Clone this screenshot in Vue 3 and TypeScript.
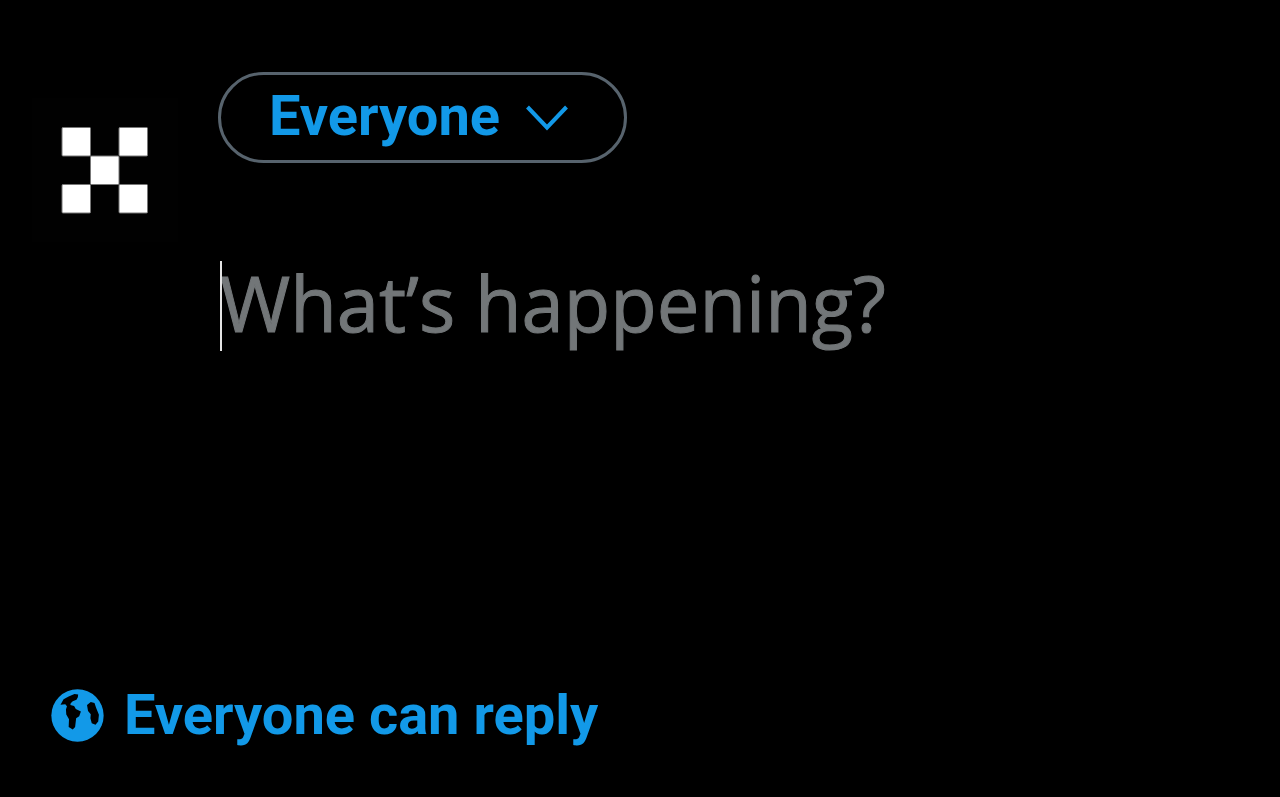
<script setup lang="ts">
import { ref } from 'vue'

const draft = ref<string>('')
const squares: { x: number; y: number }[] = [
  { x: 30, y: 29.5 },
  { x: 87, y: 29.5 },
  { x: 58.5, y: 58 },
  { x: 30, y: 86.5 },
  { x: 87, y: 86.5 },
]
</script>

<template>
  <main class="composer">
    <div class="compose-row">
      <svg class="avatar" viewBox="0 0 146 144" role="img" aria-label="Profile picture">
        <rect width="146" height="144" fill="#010101" />
        <rect
          v-for="(s, i) in squares"
          :key="i"
          :x="s.x"
          :y="s.y"
          width="28.5"
          height="28.5"
          rx="1"
          fill="#fff"
          stroke="#777"
          stroke-width="1"
        />
      </svg>
      <div class="body">
        <button class="audience" type="button" aria-haspopup="menu">
          <span>Everyone</span>
          <svg class="chevron" viewBox="0 0 42 26" aria-hidden="true">
            <path d="M1.5 2 L21 22.5 L40.5 2" fill="none" stroke="currentColor" stroke-width="4" />
          </svg>
        </button>
        <div class="field">
          <textarea v-model="draft" class="input" rows="1" placeholder="What’s happening?" aria-label="Post text"></textarea>
          <span v-if="!draft" class="cursor" aria-hidden="true"></span>
        </div>
      </div>
    </div>
    <button class="reply" type="button">
      <svg class="globe" viewBox="4 4 156 156" aria-hidden="true">
        <circle cx="82" cy="82" r="77" fill="currentColor" />
        <path
          d="M32 50 L41 34 L56 26 L73 19 L84 20 L83 28 L79 36 L68 40 L62 46 L61 51 L72 54 L77 63 L92 70 L87 84 L78 90 L75 116 L68 123 L56 116 L57 93 L49 79 L48 64 L51 55 L46 49 Z"
          fill="#000"
        />
        <path d="M110 51 L121 42 L132 45 L137 60 L145 80 L143 100 L135 109 L124 105 L120 90 L121 78 L113 69 Z" fill="#000" />
      </svg>
      <span>Everyone can reply</span>
    </button>
  </main>
</template>

<style>
body {
  background: #000;
}
</style>

<style scoped>
.composer {
  box-sizing: border-box;
  min-height: 100vh;
  padding: 72px 32px 50px;
  display: flex;
  flex-direction: column;
  align-items: stretch;
  justify-content: space-between;
  background: #000;
  color: #1299e8;
  font-family: Roboto, "Liberation Sans", sans-serif;
}
.compose-row {
  display: flex;
  align-items: flex-start;
  gap: 40px;
}
.avatar {
  flex: none;
  width: 146px;
  margin-top: 26px;
}
.body {
  flex: 1;
  min-width: 0;
  display: flex;
  flex-direction: column;
  align-items: flex-start;
  gap: 98px;
}
button {
  display: flex;
  align-items: center;
  margin: 0;
  background: none;
  color: inherit;
  font: 700 56px/64px Roboto, "Liberation Sans", sans-serif;
  white-space: nowrap;
  cursor: pointer;
}
.audience {
  box-sizing: border-box;
  height: 91px;
  padding: 0 56px 0 48px;
  gap: 26px;
  border: 3px solid #57636d;
  border-radius: 46px;
}
.audience span {
  padding-bottom: 4px;
}
.chevron {
  width: 42px;
}
.field {
  position: relative;
  width: 100%;
}
.input {
  display: block;
  box-sizing: border-box;
  width: 100%;
  padding: 0 0 8px 2px;
  border: 0;
  outline: 0;
  resize: none;
  overflow: hidden;
  background: none;
  color: #e7e9ea;
  font: 500 76px/84px "Open Sans", "Noto Sans", sans-serif;
}
.input::placeholder {
  color: #727678;
  opacity: 1;
  -webkit-text-stroke: 1px #727678;
}
.cursor {
  position: absolute;
  top: 0;
  left: 2px;
  width: 2px;
  height: 90px;
  background: #e4e4e4;
  pointer-events: none;
}
.reply {
  align-self: flex-start;
  padding: 0 0 0 19px;
  gap: 20px;
  border: 0;
}
.globe {
  width: 53px;
}
</style>
